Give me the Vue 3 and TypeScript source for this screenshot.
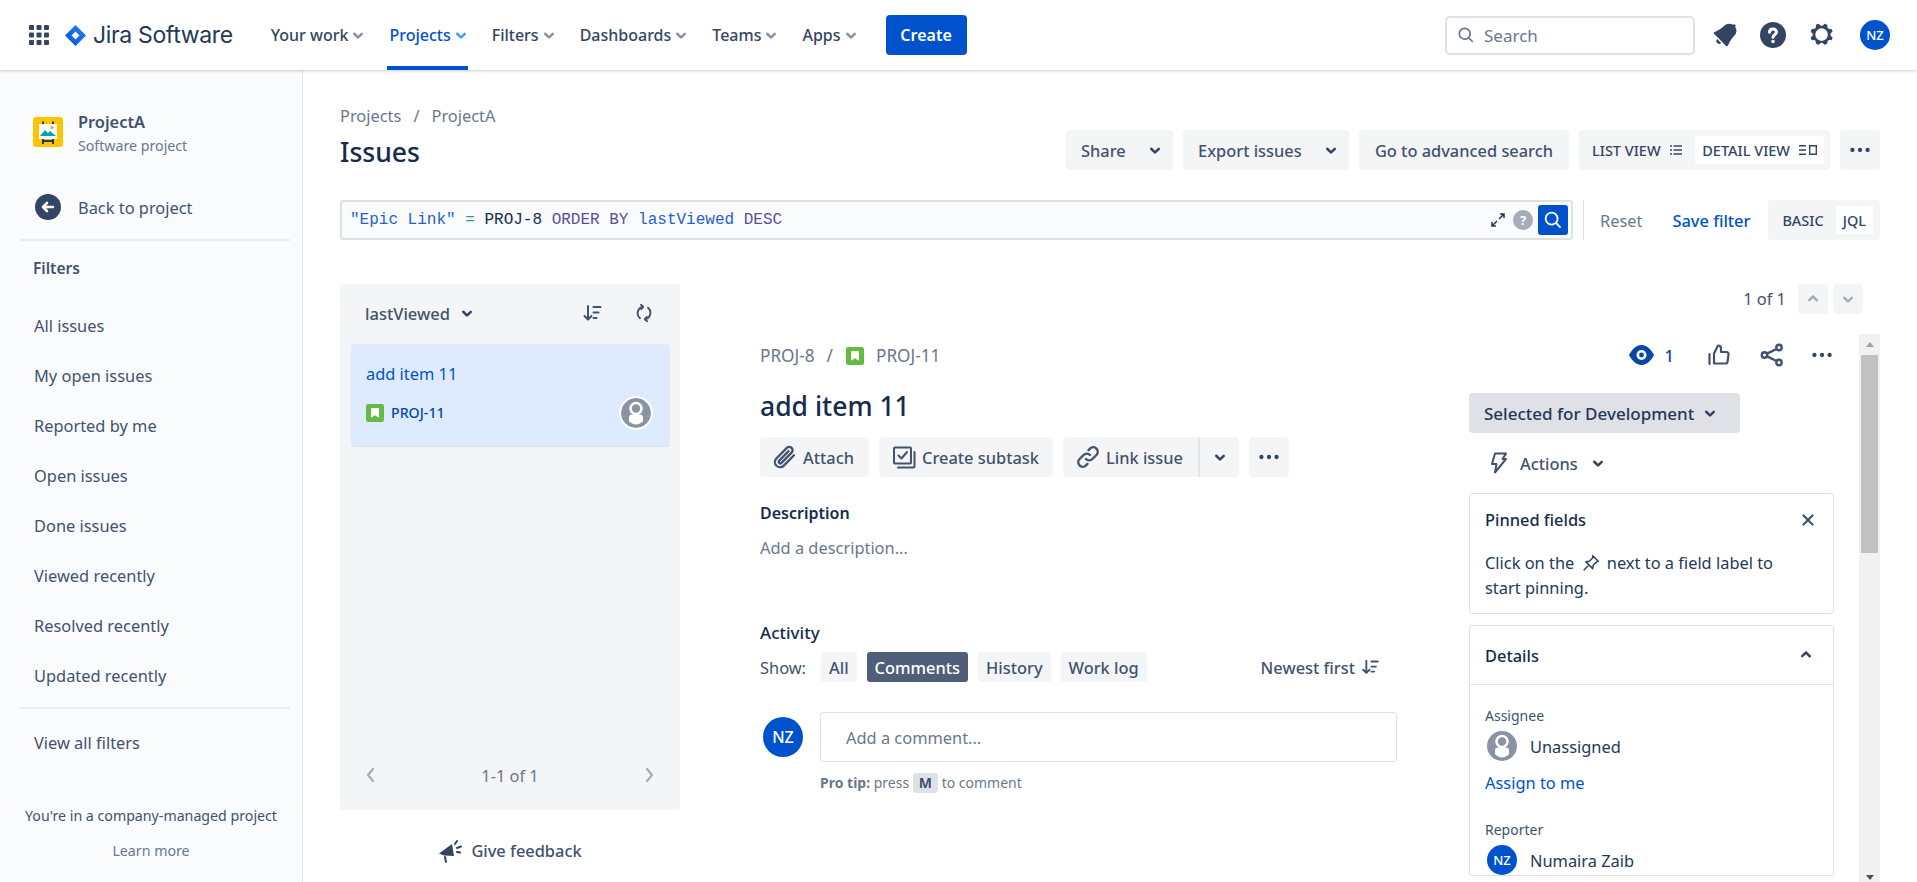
<script setup lang="ts">
const navItems = ['Your work', 'Projects', 'Filters', 'Dashboards', 'Teams', 'Apps'];
const filters = [
    'All issues',
    'My open issues',
    'Reported by me',
    'Open issues',
    'Done issues',
    'Viewed recently',
    'Resolved recently',
    'Updated recently'
];
const activityTabs = ['All', 'Comments', 'History', 'Work log'];
</script>

<template>
    <svg class="sprite" xmlns="http://www.w3.org/2000/svg">
        <symbol id="chev" viewBox="0 0 24 24">
            <path fill="currentColor" d="M8.292 10.293a1.009 1.009 0 000 1.419l2.939 2.965c.218.215.5.322.779.322s.556-.107.769-.322l2.93-2.955a1.01 1.01 0 000-1.419.987.987 0 00-1.406 0l-2.298 2.317-2.307-2.327a.99.99 0 00-1.406 0z" />
        </symbol>
        <symbol id="more" viewBox="0 0 24 24">
            <circle cx="5" cy="12" r="2" fill="currentColor" />
            <circle cx="12" cy="12" r="2" fill="currentColor" />
            <circle cx="19" cy="12" r="2" fill="currentColor" />
        </symbol>
        <symbol id="search" viewBox="0 0 24 24">
            <path fill="currentColor" d="M16.436 15.085l3.94 4.01a1 1 0 01-1.425 1.402l-3.938-4.006a7.5 7.5 0 111.423-1.406zM10.5 16a5.5 5.5 0 100-11 5.5 5.5 0 000 11z" />
        </symbol>
        <symbol id="sort" viewBox="0 0 24 24">
            <path fill="none" stroke="currentColor" stroke-width="2" stroke-linecap="round" stroke-linejoin="round" d="M8 5v13M4.5 15l3.5 3.5 3.5-3.5M13.5 6h7M13.5 11.5h5M13.5 17h3" />
        </symbol>
        <symbol id="story" viewBox="0 0 16 16">
            <rect width="16" height="16" rx="2" fill="#65ba43" />
            <path fill="#fff" d="M5 3.5h6a.5.5 0 01.5.5v8.2L8 10l-3.500 2.200V4a.5.5 0 01.5-.5z" />
        </symbol>
        <symbol id="person" viewBox="0 0 30 30">
            <circle cx="15" cy="15" r="15" fill="#8993a4" />
            <circle cx="15" cy="10.500" r="5.500" fill="none" stroke="#fff" stroke-width="2.600" />
            <path fill="#fff" d="M8 19.500a3 3 0 013-3h8a3 3 0 013 3v3.800a9.500 9.500 0 01-14 0z" />
        </symbol>
    </svg>

    <div class="page">
        <header class="topnav">
            <svg class="apps" viewBox="0 0 20 20">
                <g fill="#344563">
                    <rect x="0" y="0" width="5" height="5" rx="1" />
                    <rect x="7.500" y="0" width="5" height="5" rx="1" />
                    <rect x="15" y="0" width="5" height="5" rx="1" />
                    <rect x="0" y="7.500" width="5" height="5" rx="1" />
                    <rect x="7.500" y="7.500" width="5" height="5" rx="1" />
                    <rect x="15" y="7.500" width="5" height="5" rx="1" />
                    <rect x="0" y="15" width="5" height="5" rx="1" />
                    <rect x="7.500" y="15" width="5" height="5" rx="1" />
                    <rect x="15" y="15" width="5" height="5" rx="1" />
                </g>
            </svg>
            <svg class="logo" viewBox="0 0 21 21">
                <defs>
                    <linearGradient id="jira-blue" x1="0" y1="1" x2="1" y2="0">
                        <stop offset="0" stop-color="#0052cc" />
                        <stop offset="1" stop-color="#2684ff" />
                    </linearGradient>
                </defs>
                <path fill="url(#jira-blue)" fill-rule="evenodd" d="M10.500 0l10.500 10.500-10.500 10.500-10.500-10.500zM10.500 6.500l-4 4 4 4 4-4z" />
            </svg>
            <span class="wordmark">Jira Software</span>
            <nav class="nav-items">
                <a v-for="item in navItems" :key="item" class="nav-item" :class="{ active: item === 'Projects' }">
                    {{ item }}
                    <svg class="nav-chev"><use href="#chev" /></svg>
                </a>
            </nav>
            <button class="create">Create</button>
            <div class="nav-right">
                <div class="search-box">
                    <svg class="search-icon"><use href="#search" /></svg>
                    <span>Search</span>
                </div>
                <svg class="bell" viewBox="0 0 24 24">
                    <path fill="#344563" d="M6.485 17.669a2 2 0 002.829 0l-2.829-2.83a2 2 0 000 2.83zm4.897-12.191l-.725.725c-.782.782-2.21 1.813-3.206 2.311l-3.017 1.509c-.495.248-.584.774-.187 1.171l8.556 8.556c.398.396.922.313 1.171-.188l1.51-3.016c.494-.988 1.526-2.42 2.311-3.206l.725-.726a5.048 5.048 0 00.64-6.356 1.01 1.01 0 10-1.354-1.494c-.023.025-.046.049-.066.075a5.043 5.043 0 00-2.788-.84 5.036 5.036 0 00-3.57 1.479z" />
                </svg>
                <svg class="help" viewBox="0 0 26 26">
                    <circle cx="13" cy="13" r="13" fill="#344563" />
                    <path fill="none" stroke="#fff" stroke-width="3" stroke-linecap="round" d="M9.500 10.200c0-2 1.500-3.200 3.500-3.200s3.500 1.300 3.500 3.100c0 2.700-3.500 2.700-3.500 5.200" />
                    <circle cx="13" cy="19.500" r="1.800" fill="#fff" />
                </svg>
                <svg class="gear" viewBox="0 0 24 24">
                    <path fill="#344563" fill-rule="evenodd" d="M11.701 16.700a5.002 5.002 0 110-10.003 5.002 5.002 0 010 10.004m8.368-3.117a1.995 1.995 0 01-1.346-1.885c0-.876.563-1.613 1.345-1.885a.48.48 0 00.315-.574 8.947 8.947 0 00-.836-1.993.477.477 0 00-.598-.195 2.040 2.040 0 01-1.290.08 1.988 1.988 0 01-1.404-1.395 2.040 2.040 0 01.076-1.297.478.478 0 00-.196-.597 8.980 8.980 0 00-1.975-.826.479.479 0 00-.574.314 1.995 1.995 0 01-1.885 1.346 1.994 1.994 0 01-1.884-1.345.482.482 0 00-.575-.315c-.708.2-1.379.485-2.004.842a.47.47 0 00-.198.582A2.002 2.002 0 014.445 7.060a.478.478 0 00-.595.196 8.946 8.946 0 00-.833 1.994.48.48 0 00.308.572 1.995 1.995 0 011.323 1.877c0 .867-.552 1.599-1.324 1.877a.479.479 0 00-.308.57 8.990 8.990 0 00.723 1.790.477.477 0 00.624.194c.595-.273 1.301-.302 1.883.09.72.485.994 1.303.815 2.105a.466.466 0 00.195.533 8.990 8.990 0 001.992.9.474.474 0 00.571-.308 1.996 1.996 0 011.884-1.335c.875 0 1.625.553 1.899 1.335.09.246.35.38.57.308a8.990 8.990 0 001.993-.9.467.467 0 00.195-.533c-.18-.802.096-1.620.815-2.104.582-.393 1.288-.364 1.883-.09.232.107.5.021.624-.195a8.990 8.990 0 00.723-1.790.479.479 0 00-.308-.57z" />
                </svg>
                <span class="avatar avatar-nav">NZ</span>
            </div>
        </header>

        <div class="body">
            <aside class="sidebar">
                <div class="project">
                    <svg class="project-icon" viewBox="0 0 30 30">
                        <rect width="30" height="30" rx="3" fill="#ffc400" />
                        <path stroke="#253858" stroke-width="2" d="M10 4.500v3M20 4.500v3M10 22v5M20 22v5M10 24h10" />
                        <rect x="6" y="7" width="18" height="15" fill="#fff" />
                        <path fill="#00a3bf" d="M7 19l5-6 3 3 2-2 6 5z" />
                        <circle cx="19" cy="10.500" r="1.500" fill="#ff991f" />
                    </svg>
                    <div>
                        <div class="project-name">ProjectA</div>
                        <div class="project-type">Software project</div>
                    </div>
                </div>
                <a class="back">
                    <svg class="back-icon" viewBox="0 0 26 26">
                        <circle cx="13" cy="13" r="13" fill="#344563" />
                        <path fill="none" stroke="#fff" stroke-width="2.600" stroke-linecap="round" stroke-linejoin="round" d="M18 13H8.500M12 9l-4 4 4 4" />
                    </svg>
                    Back to project
                </a>
                <div class="side-divider"></div>
                <div class="filters-title">Filters</div>
                <a v-for="f in filters" :key="f" class="filter-item">{{ f }}</a>
                <div class="side-divider side-divider-low"></div>
                <a class="filter-item view-all">View all filters</a>
                <div class="side-footer">
                    <span>You're in a company-managed project</span>
                    <a class="learn">Learn more</a>
                </div>
            </aside>

            <main class="main">
                <div class="head-row">
                    <div>
                        <div class="crumbs"><span>Projects</span><span class="slash">/</span><span>ProjectA</span></div>
                        <h1 class="page-title">Issues</h1>
                    </div>
                    <div class="head-actions">
                        <button class="btn btn-share">Share <svg class="btn-chev"><use href="#chev" /></svg></button>
                        <button class="btn btn-export">Export issues <svg class="btn-chev"><use href="#chev" /></svg></button>
                        <button class="btn btn-advanced">Go to advanced search</button>
                        <div class="toggle toggle-view">
                            <span class="toggle-item">
                                LIST VIEW
                                <svg class="toggle-icon" viewBox="0 0 12 12"><path stroke="currentColor" stroke-width="1.400" d="M0 2h2M3.500 2H12M0 6h2M3.500 6H12M0 10h2M3.500 10H12" /></svg>
                            </span>
                            <span class="toggle-item on">
                                DETAIL VIEW
                                <svg class="toggle-icon wide" viewBox="0 0 18 12"><path fill="none" stroke="currentColor" stroke-width="1.400" d="M0 1.700h7M0 6h7M0 10.300h7M10.700 1.700h6.600v8.600h-6.600z" /></svg>
                            </span>
                        </div>
                        <button class="btn btn-icon"><svg class="more-icon"><use href="#more" /></svg></button>
                    </div>
                </div>

                <div class="jql-row">
                    <div class="jql-box">
                        <code class="jql">
                            <span class="c-field">"Epic Link"</span> <span class="c-op">=</span> PROJ-8 <span class="c-kw">ORDER BY</span> <span class="c-field">lastViewed</span> <span class="c-kw">DESC</span>
                        </code>
                        <svg class="expand" viewBox="0 0 14 14"><path fill="none" stroke="#253858" stroke-width="1.500" d="M8 6l5-5M9 1h4v4M6 8l-5 5M1 9v4h4" /></svg>
                        <span class="jql-help">?</span>
                        <span class="jql-search"><svg><use href="#search" /></svg></span>
                    </div>
                    <div class="jql-sep"></div>
                    <a class="reset">Reset</a>
                    <a class="save">Save filter</a>
                    <div class="toggle toggle-small">
                        <span class="toggle-item">BASIC</span>
                        <span class="toggle-item on">JQL</span>
                    </div>
                </div>

                <div class="content">
                    <section class="list-col">
                        <div class="list-panel">
                            <div class="list-head">
                                <span class="sort-label">lastViewed</span>
                                <svg class="sort-chev"><use href="#chev" /></svg>
                                <svg class="list-sort"><use href="#sort" /></svg>
                                <svg class="refresh" viewBox="0 0 18 18">
                                    <g fill="none" stroke="#42526e" stroke-width="1.900" stroke-linecap="round" stroke-linejoin="round">
                                        <path d="M8 2.800A6.500 6.500 0 005 14.200M6 .8l2.200 2-2 2.200" />
                                        <path d="M10 15.200A6.500 6.500 0 0013 3.800M12 17.200l-2.200-2 2-2.200" />
                                    </g>
                                </svg>
                            </div>
                            <div class="issue-card">
                                <div class="issue-card-title">add item 11</div>
                                <div class="issue-card-row">
                                    <svg class="story"><use href="#story" /></svg>
                                    <span class="issue-card-key">PROJ-11</span>
                                    <svg class="card-person"><use href="#person" /></svg>
                                </div>
                            </div>
                            <div class="list-pager">
                                <svg class="pager-arrow" viewBox="0 0 10 16"><path fill="none" stroke="#a5adba" stroke-width="2.200" stroke-linecap="round" stroke-linejoin="round" d="M8 2L3 8l5 6" /></svg>
                                <span>1-1 of 1</span>
                                <svg class="pager-arrow" viewBox="0 0 10 16"><path fill="none" stroke="#a5adba" stroke-width="2.200" stroke-linecap="round" stroke-linejoin="round" d="M2 2l5 6-5 6" /></svg>
                            </div>
                        </div>
                        <a class="feedback">
                            <svg class="feedback-icon" viewBox="0 0 24 24">
                                <path fill="#344563" d="M1 14.500L14 5l2 12-10-.5z" />
                                <path fill="none" stroke="#344563" stroke-width="2" stroke-linecap="round" d="M7 18l1 5M17 5l2-3M19 9l4-1.500M19 13l3 .5" />
                            </svg>
                            Give feedback
                        </a>
                    </section>

                    <section class="detail">
                        <div class="detail-pager">
                            <span class="pager-text">1 of 1</span>
                            <button class="pager-btn"><svg class="flip"><use href="#chev" /></svg></button>
                            <button class="pager-btn"><svg><use href="#chev" /></svg></button>
                        </div>
                        <div class="detail-scroll">
                            <div class="issue-main">
                                <div class="issue-crumbs">
                                    <span>PROJ-8</span><span class="slash">/</span>
                                    <svg class="story story-crumb"><use href="#story" /></svg>
                                    <span>PROJ-11</span>
                                </div>
                                <h2 class="issue-title">add item 11</h2>
                                <div class="issue-actions">
                                    <button class="btn btn-attach">
                                        <svg class="act-icon" viewBox="3 2 19 20"><path fill="none" stroke="#42526e" stroke-width="1.900" stroke-linecap="round" stroke-linejoin="round" d="M20 10.500l-8.500 8.700a4.300 4.300 0 01-6.200-6L14 4.400a2.800 2.800 0 014 4l-8.400 8.500a1.300 1.300 0 01-1.900-1.900l7.800-7.900" /></svg>
                                        Attach
                                    </button>
                                    <button class="btn btn-subtask">
                                        <svg class="act-icon" viewBox="0 0 24 24"><path fill="none" stroke="#42526e" stroke-width="2" stroke-linecap="round" stroke-linejoin="round" d="M3 2.500h15a1 1 0 011 1v14a1 1 0 01-1 1H3a1 1 0 01-1-1v-14a1 1 0 011-1zM6.500 10.500l3 3 5.500-6.500M22.500 7v14a1.500 1.500 0 01-1.500 1.500H6" /></svg>
                                        Create subtask
                                    </button>
                                    <div class="split">
                                        <button class="btn btn-left">
                                            <svg class="act-icon" viewBox="0 0 24 24"><path fill="none" stroke="#42526e" stroke-width="2.400" stroke-linecap="round" d="M10 14a4.500 4.500 0 006.400 0l4-4a4.500 4.500 0 00-6.400-6.400l-1.500 1.500M14 10a4.500 4.500 0 00-6.400 0l-4 4a4.500 4.500 0 006.400 6.400l1.500-1.500" /></svg>
                                            Link issue
                                        </button>
                                        <button class="btn btn-right"><svg class="btn-chev"><use href="#chev" /></svg></button>
                                    </div>
                                    <button class="btn btn-icon"><svg class="more-icon"><use href="#more" /></svg></button>
                                </div>
                                <h3 class="sec-title desc-title">Description</h3>
                                <div class="placeholder">Add a description...</div>
                                <h3 class="sec-title activity-title">Activity</h3>
                                <div class="activity-row">
                                    <span class="show">Show:</span>
                                    <button v-for="tab in activityTabs" :key="tab" class="tab" :class="{ selected: tab === 'Comments' }">{{ tab }}</button>
                                    <span class="newest">Newest first <svg class="newest-icon"><use href="#sort" /></svg></span>
                                </div>
                                <div class="comment-row">
                                    <span class="avatar avatar-comment">NZ</span>
                                    <div class="comment-box">Add a comment...</div>
                                </div>
                                <div class="pro-tip"><b>Pro tip:</b> press <kbd>M</kbd> to comment</div>
                            </div>

                            <div class="issue-side">
                                <div class="side-icons">
                                    <svg class="eye" viewBox="0 0 25 20">
                                        <path fill="#0747a6" d="M12.500 0c6 0 10.500 6 12.500 10-2 4-6.500 10-12.500 10S2 14 0 10C2 6 6.500 0 12.500 0z" />
                                        <circle cx="12.500" cy="10" r="5" fill="#fff" />
                                        <circle cx="12.500" cy="10" r="2.400" fill="#0747a6" />
                                    </svg>
                                    <span class="watch-count">1</span>
                                    <svg class="thumb" viewBox="0 0 22 22"><path fill="none" stroke="#42526e" stroke-width="2.200" stroke-linecap="round" stroke-linejoin="round" d="M1.500 10v10M6 9.500l4-8c1.800 0 3 1.300 3 3v3.500h5.500a2 2 0 012 2.300l-1 7.500a2 2 0 01-2 1.700H6z" /></svg>
                                    <svg class="share" viewBox="0 0 24 24"><g fill="none" stroke="#42526e" stroke-width="2.400"><circle cx="19" cy="4.500" r="2.700" /><circle cx="19" cy="19.500" r="2.700" /><circle cx="4.500" cy="12" r="2.700" /><path d="M7 10.700L16.600 6M7 13.300l9.600 4.700" /></g></svg>
                                    <svg class="more-icon more-side"><use href="#more" /></svg>
                                </div>
                                <button class="status">Selected for Development <svg class="btn-chev"><use href="#chev" /></svg></button>
                                <div class="actions-row">
                                    <svg class="bolt" viewBox="0 0 18 22"><path fill="none" stroke="#42526e" stroke-width="2" stroke-linejoin="round" d="M5 1.500h11l-3.500 5.500H16L5 20.500l1.500-8.500H2z" /></svg>
                                    <span>Actions</span>
                                    <svg class="btn-chev"><use href="#chev" /></svg>
                                </div>
                                <div class="card">
                                    <div class="card-top">
                                        <span class="card-title">Pinned fields</span>
                                        <svg class="close" viewBox="0 0 12 12"><path stroke="#42526e" stroke-width="2.200" stroke-linecap="round" d="M1.500 1.500l9 9M10.500 1.500l-9 9" /></svg>
                                    </div>
                                    <p class="pinned-text">
                                        Click on the
                                        <svg class="pin" viewBox="0 0 16 16"><path fill="none" stroke="#344563" stroke-width="1.400" stroke-linejoin="round" d="M9.500 1.500l5 5-1.500.5-3 3-.5 3-6-6 3-.5 3-3zM5.500 10.500L1.500 14.500" /></svg>
                                        next to a field label to<br>start pinning.
                                    </p>
                                </div>
                                <div class="card card-details">
                                    <div class="details-head">
                                        <span class="card-title">Details</span>
                                        <svg class="btn-chev flip"><use href="#chev" /></svg>
                                    </div>
                                    <div class="details-body">
                                        <div class="field-label">Assignee</div>
                                        <div class="field-value">
                                            <svg class="field-person"><use href="#person" /></svg>
                                            Unassigned
                                        </div>
                                        <a class="assign">Assign to me</a>
                                        <div class="field-label reporter">Reporter</div>
                                        <div class="field-value">
                                            <span class="avatar avatar-field">NZ</span>
                                            Numaira Zaib
                                        </div>
                                    </div>
                                </div>
                            </div>

                            <div class="scrollbar">
                                <span class="arrow-up"></span>
                                <span class="thumb-bar"></span>
                                <span class="arrow-down"></span>
                            </div>
                        </div>
                    </section>
                </div>
            </main>
        </div>
    </div>
</template>

<style>
html, body {
    margin: 0;
    overflow: hidden;
    background: #fff;
}
</style>

<style scoped>
.sprite {
    display: none;
}

.page {
    display: flex;
    flex-direction: column;
    width: 1917px;
    height: 882px;
    overflow: hidden;
    font-family: "Noto Sans", "Open Sans", sans-serif;
    font-size: 16.4px;
    color: #42526e;
}

button {
    font: inherit;
    border: 0;
    cursor: pointer;
}

h1, h2, h3, p {
    margin: 0;
}

.avatar {
    display: inline-flex;
    align-items: center;
    justify-content: center;
    flex: none;
    border-radius: 50%;
    background: #0052cc;
    color: #fff;
    font-weight: 500;
}

/* top bar */
.topnav {
    position: relative;
    z-index: 2;
    display: flex;
    flex: none;
    align-items: center;
    height: 70px;
    padding: 0 27px 0 29px;
    background: #fff;
    box-shadow: 0 1px 3px rgba(9, 30, 66, 0.22);
    box-sizing: border-box;
}

.apps {
    width: 20px;
    height: 20px;
}

.logo {
    width: 21px;
    height: 21px;
    margin-left: 16px;
}

.wordmark {
    margin-left: 7px;
    font-family: Inter, sans-serif;
    font-size: 23px;
    color: #253858;
    letter-spacing: -0.35px;
}

.nav-items {
    display: flex;
    align-self: stretch;
    gap: 22px;
    margin-left: 36px;
}

.nav-item {
    display: flex;
    align-items: center;
    height: 70px;
    padding: 0 2px;
    box-sizing: border-box;
    font-size: 16px;
    font-weight: 500;
    color: #344563;
}

.nav-item.active {
    color: #0052cc;
    border-bottom: 4px solid #0052cc;
    padding-top: 4px;
}

.nav-chev {
    width: 30px;
    height: 30px;
    margin: 0 -10px 0 -5px;
    color: #8993a4;
}

.active .nav-chev {
    color: #4c9aff;
}

.create {
    width: 81px;
    height: 40px;
    margin-left: 28px;
    border-radius: 4px;
    background: #0052cc;
    color: #fff;
    font-weight: 600;
    font-size: 16px;
}

.nav-right {
    display: flex;
    align-items: center;
    margin-left: auto;
}

.search-box {
    display: flex;
    align-items: center;
    width: 250px;
    height: 39px;
    box-sizing: border-box;
    padding-left: 9px;
    border: 2px solid #dfe1e6;
    border-radius: 5px;
    color: #6b778c;
    font-size: 17px;
}

.search-icon {
    width: 20px;
    height: 20px;
    margin-right: 8px;
}

.bell {
    width: 34px;
    height: 34px;
    margin-left: 13px;
}

.help {
    width: 26px;
    height: 26px;
    margin-left: 18px;
}

.gear {
    width: 30px;
    height: 30px;
    margin-left: 21px;
}

.avatar-nav {
    width: 30px;
    height: 30px;
    margin-left: 23px;
    font-size: 13px;
}

/* left sidebar */
.body {
    display: flex;
    flex: 1;
    min-height: 0;
}

.sidebar {
    display: flex;
    flex: none;
    flex-direction: column;
    box-sizing: border-box;
    width: 303px;
    padding: 40px 0 19px;
    border-right: 1px solid #e4e6ea;
    background: #fafbfc;
}

.project {
    display: flex;
    gap: 15px;
    padding-left: 33px;
}

.project-icon {
    width: 30px;
    height: 30px;
    margin-top: 7px;
}

.project-name {
    font-weight: 600;
    line-height: 24px;
}

.project-type {
    font-size: 14.2px;
    line-height: 24px;
    color: #6b778c;
}

.back {
    display: flex;
    align-items: center;
    gap: 17px;
    height: 40px;
    margin-top: 29px;
    padding-left: 35px;
}

.back-icon {
    width: 26px;
    height: 26px;
}

.side-divider {
    height: 2px;
    margin: 12px 12px 0 20px;
    background: #ebecf0;
}

.side-divider-low {
    margin-top: 7px;
}

.filters-title {
    margin: 15px 0 20px 33px;
    font-size: 15.5px;
    font-weight: 600;
    line-height: 24px;
}

.filter-item {
    display: flex;
    align-items: center;
    height: 50px;
    padding-left: 34px;
    flex: none;
}

.view-all {
    margin-top: 8px;
}

.side-footer {
    display: flex;
    flex-direction: column;
    align-items: center;
    gap: 11px;
    margin-top: auto;
    font-size: 14.2px;
    line-height: 24px;
}

.learn {
    color: #6b778c;
}

/* main header */
.main {
    flex: 1;
    min-width: 0;
    padding: 34px 37px 0;
}

.head-row {
    display: flex;
    align-items: flex-end;
    justify-content: space-between;
}

.crumbs {
    display: flex;
    line-height: 24px;
    color: #6b778c;
}

.slash {
    margin: 0 12px;
}

.page-title {
    margin-top: 6px;
    font-size: 26.5px;
    font-weight: 500;
    line-height: 36px;
    color: #172b4d;
}

.head-actions {
    display: flex;
    gap: 10px;
}

.btn {
    display: inline-flex;
    align-items: center;
    flex: none;
    height: 40px;
    padding: 0 15px;
    border-radius: 4px;
    background: #f4f5f7;
    color: #42526e;
    font-weight: 500;
}

.btn-chev {
    flex: none;
    width: 30px;
    height: 30px;
    color: #344563;
}

.btn-share {
    justify-content: space-between;
    width: 107px;
    padding-right: 3px;
}

.btn-export {
    justify-content: space-between;
    width: 166px;
    padding-right: 3px;
}

.btn-advanced {
    justify-content: center;
    width: 210px;
    padding: 0;
}

.btn-icon {
    justify-content: center;
    width: 40px;
    padding: 0;
}

.more-icon {
    width: 26px;
    height: 26px;
    color: #344563;
}

.toggle {
    display: flex;
    align-items: center;
    height: 40px;
    border-radius: 4px;
    background: #f4f5f7;
    font-size: 14.5px;
    font-weight: 500;
    color: #344563;
}

.toggle-view {
    justify-content: space-between;
    box-sizing: border-box;
    width: 251px;
    padding: 0 6px 0 13px;
}

.toggle-item {
    display: inline-flex;
    align-items: center;
    gap: 9px;
    height: 28px;
    border-radius: 3px;
}

.toggle-item.on {
    padding: 0 7px;
    background: #fff;
}

.toggle-icon {
    width: 12px;
    height: 12px;
}

.toggle-icon.wide {
    width: 18px;
}

/* jql */
.jql-row {
    display: flex;
    align-items: center;
    margin-top: 30px;
}

.jql-box {
    display: flex;
    flex: none;
    align-items: center;
    box-sizing: border-box;
    width: 1233px;
    height: 40px;
    padding: 0 3px 0 8px;
    border: 2px solid #dfe1e6;
    border-radius: 3px;
    background: #fafbfc;
}

.jql {
    flex: 1;
    font-family: "Liberation Mono", monospace;
    font-size: 16px;
    color: #172b4d;
}

.c-field {
    color: #1f62cc;
}

.c-op {
    color: #2f9e87;
}

.c-kw {
    color: #5e4d9c;
}

.expand {
    width: 14px;
    height: 14px;
    margin-right: 8px;
}

.jql-help {
    display: flex;
    align-items: center;
    justify-content: center;
    width: 20px;
    height: 20px;
    margin-right: 5px;
    border-radius: 50%;
    background: #a5adba;
    color: #fff;
    font-size: 13px;
    font-weight: 700;
}

.jql-search {
    display: flex;
    align-items: center;
    justify-content: center;
    width: 30px;
    height: 30px;
    border-radius: 3px;
    background: #0052cc;
    color: #fff;
}

.jql-search svg {
    width: 22px;
    height: 22px;
}

.jql-sep {
    width: 1px;
    height: 40px;
    margin: 0 16px 0 10px;
    background: #dfe1e6;
}

.reset {
    color: #6b778c;
}

.save {
    margin-left: 30px;
    color: #0052cc;
    font-weight: 500;
}

.toggle-small {
    gap: 12px;
    margin-left: auto;
    padding: 0 7px 0 14px;
}

.toggle-small .toggle-item.on {
    padding: 0 7px;
}

/* issue list */
.content {
    display: flex;
    margin-top: 44px;
}

.list-col {
    flex: none;
    width: 340px;
}

.list-panel {
    display: flex;
    flex-direction: column;
    height: 526px;
    border-radius: 4px;
    background: #f4f5f7;
}

.list-head {
    display: flex;
    align-items: center;
    flex: none;
    height: 60px;
    padding: 0 27px 2px 25px;
    box-sizing: border-box;
}

.sort-label {
    font-size: 16.5px;
    font-weight: 500;
}

.sort-chev {
    width: 30px;
    height: 30px;
    margin-left: 2px;
    color: #344563;
}

.list-sort {
    width: 24px;
    height: 24px;
    margin-left: auto;
    margin-right: -1px;
}

.refresh {
    width: 18px;
    height: 18px;
    margin-left: 32px;
}

.issue-card {
    flex: none;
    box-sizing: border-box;
    height: 102px;
    margin: 0 10px 0 11px;
    padding: 18px 15px 0;
    border-radius: 4px;
    background: #deebff;
    box-shadow: 0 1px 1px rgba(9, 30, 66, 0.1);
}

.issue-card-title {
    line-height: 24px;
    color: #0052cc;
}

.issue-card-row {
    display: flex;
    align-items: center;
    margin-top: 10px;
    height: 34px;
}

.story {
    flex: none;
    width: 18px;
    height: 18px;
}

.issue-card-key {
    margin: 0 0 2px 7px;
    font-size: 14.2px;
    font-weight: 500;
    color: #0747a6;
}

.card-person {
    width: 34px;
    height: 34px;
    margin-left: auto;
    margin-right: 2px;
    border-radius: 50%;
    background: #fff;
    padding: 2px;
    box-sizing: border-box;
}

.list-pager {
    display: flex;
    align-items: center;
    justify-content: space-between;
    height: 70px;
    margin-top: auto;
    padding: 0 25px;
    color: #6b778c;
}

.pager-arrow {
    width: 10px;
    height: 16px;
}

.feedback {
    display: flex;
    align-items: center;
    justify-content: center;
    gap: 9px;
    margin-top: 29px;
    line-height: 24px;
    font-weight: 500;
}

.feedback-icon {
    width: 24px;
    height: 24px;
}

/* issue detail */
.detail {
    flex: 1;
    min-width: 0;
    margin-left: 80px;
}

.detail-pager {
    display: flex;
    align-items: flex-start;
    justify-content: flex-end;
    gap: 5px;
    height: 50px;
    padding-right: 17px;
    line-height: 30px;
}

.pager-text {
    margin-right: 7px;
}

.pager-btn {
    display: flex;
    align-items: center;
    justify-content: center;
    width: 30px;
    height: 30px;
    padding: 0;
    border-radius: 4px;
    background: #f4f5f7;
    color: #a5adba;
}

.pager-btn svg {
    width: 30px;
    height: 30px;
}

.flip {
    transform: rotate(180deg);
}

.detail-scroll {
    display: flex;
    align-items: flex-start;
}

.issue-main {
    flex: none;
    width: 637px;
    padding-top: 10px;
}

.issue-crumbs {
    display: flex;
    align-items: center;
    font-size: 17.2px;
    line-height: 24px;
    color: #6b778c;
}

.story-crumb {
    margin-right: 12px;
}

.issue-crumbs .slash {
    margin: 0 13px 0 12px;
}

.issue-title {
    margin-top: 18px;
    font-size: 26.5px;
    font-weight: 500;
    line-height: 40px;
    color: #172b4d;
}

.issue-actions {
    display: flex;
    gap: 10px;
    margin-top: 11px;
}

.act-icon {
    width: 24px;
    height: 24px;
    margin-right: 6px;
}

.issue-actions .btn {
    padding: 0 0 0 13px;
}

.issue-actions .btn-attach {
    width: 109px;
}

.issue-actions .btn-subtask {
    width: 174px;
}

.split {
    display: flex;
}

.issue-actions .btn-left {
    width: 135px;
    border-radius: 4px 0 0 4px;
}

.issue-actions .btn-right {
    width: 41px;
    padding: 0;
    justify-content: center;
    border-radius: 0 4px 4px 0;
    border-left: 2px solid #e4e6ea;
}

.issue-actions .btn-icon {
    padding: 0;
}

.sec-title {
    font-size: 16px;
    font-weight: 600;
    line-height: 24px;
    color: #172b4d;
}

.desc-title {
    margin-top: 24px;
}

.placeholder {
    margin-top: 11px;
    line-height: 24px;
    color: #6b778c;
}

.activity-title {
    margin-top: 61px;
    font-size: 17px;
    font-weight: 500;
}

.activity-row {
    display: flex;
    align-items: center;
    gap: 10px;
    margin-top: 7px;
    height: 30px;
}

.show {
    margin-right: 5px;
    color: #42526e;
}

.tab {
    height: 30px;
    padding: 0 8px;
    border-radius: 3px;
    background: #f4f5f7;
    color: #42526e;
    font-weight: 500;
}

.tab.selected {
    background: #505f79;
    color: #fff;
}

.newest {
    display: flex;
    align-items: center;
    gap: 4px;
    margin-left: auto;
    margin-right: 16px;
    font-weight: 500;
}

.newest-icon {
    width: 22px;
    height: 22px;
}

.comment-row {
    display: flex;
    gap: 17px;
    margin-top: 30px;
}

.avatar-comment {
    width: 40px;
    height: 40px;
    margin: 5px 0 0 3px;
    font-size: 16px;
}

.comment-box {
    display: flex;
    flex: 1;
    align-items: center;
    box-sizing: border-box;
    height: 50px;
    padding-left: 25px;
    border: 1px solid #dfe1e6;
    border-radius: 3px;
    color: #6b778c;
}

.pro-tip {
    margin: 9px 0 0 60px;
    font-size: 14px;
    line-height: 24px;
    color: #6b778c;
}

kbd {
    display: inline-block;
    padding: 0 6px;
    border-radius: 3px;
    background: #dfe1e6;
    color: #42526e;
    font: inherit;
    font-weight: 700;
    line-height: 20px;
}

/* right column */
.issue-side {
    flex: none;
    width: 365px;
    margin-left: 72px;
}

.side-icons {
    display: flex;
    align-items: center;
    justify-content: flex-end;
    height: 42px;
}

.eye {
    width: 25px;
    height: 20px;
}

.watch-count {
    margin-left: 11px;
    font-weight: 500;
    color: #0747a6;
}

.thumb {
    width: 22px;
    height: 22px;
    margin-left: 34px;
}

.share {
    width: 24px;
    height: 24px;
    margin-left: 30px;
}

.more-side {
    margin-left: 25px;
    margin-right: -1px;
}

.status {
    display: flex;
    align-items: center;
    width: 271px;
    height: 40px;
    margin-top: 17px;
    padding: 0 0 0 15px;
    border-radius: 4px;
    background: #dfe1e6;
    color: #253858;
    font-size: 17px;
    font-weight: 500;
}

.status .btn-chev {
    margin-left: 1px;
}

.actions-row {
    display: flex;
    align-items: center;
    height: 40px;
    margin-top: 10px;
    padding-left: 21px;
    font-weight: 500;
}

.bolt {
    width: 18px;
    height: 22px;
    margin-right: 12px;
}

.actions-row .btn-chev {
    margin-left: 5px;
}

.card {
    box-sizing: border-box;
    margin-top: 10px;
    border: 1px solid #dfe1e6;
    border-radius: 3px;
}

.card-top {
    display: flex;
    align-items: center;
    justify-content: space-between;
    padding: 14px 19px 0 15px;
    line-height: 24px;
}

.card-title {
    font-weight: 500;
    color: #172b4d;
}

.close {
    width: 12px;
    height: 12px;
}

.pinned-text {
    margin-top: 18px;
    padding: 0 15px 13px;
    line-height: 25px;
    color: #253858;
}

.pin {
    width: 18px;
    height: 18px;
    margin: 0 3px;
    vertical-align: -3px;
}

.card-details {
    margin-top: 11px;
}

.details-head {
    display: flex;
    align-items: center;
    justify-content: space-between;
    height: 58px;
    padding: 0 12px 0 15px;
    border-bottom: 1px solid #dfe1e6;
}

.details-body {
    padding: 20px 15px 0;
}

.field-label {
    font-size: 14px;
    line-height: 22px;
}

.field-value {
    display: flex;
    align-items: center;
    gap: 13px;
    height: 30px;
    margin: 4px 0 0 2px;
    color: #253858;
}

.field-person {
    width: 30px;
    height: 30px;
}

.assign {
    display: block;
    margin-top: 10px;
    line-height: 24px;
    color: #0052cc;
}

.reporter {
    margin-top: 24px;
}

.avatar-field {
    width: 30px;
    height: 30px;
    font-size: 13px;
}

/* scrollbar, drawn because headless chrome hides the real one */
.scrollbar {
    position: relative;
    display: flex;
    flex: none;
    flex-direction: column;
    align-items: center;
    width: 21px;
    height: 548px;
    margin-left: 25px;
    background: #f1f1f1;
}

.arrow-up {
    margin-top: 8px;
    border: 4px solid transparent;
    border-top: 0;
    border-bottom: 5px solid #a3a3a3;
}

.thumb-bar {
    width: 17px;
    height: 198px;
    margin-top: 8px;
    background: #c1c1c1;
}

.arrow-down {
    margin-top: auto;
    margin-bottom: 2px;
    border: 4px solid transparent;
    border-bottom: 0;
    border-top: 5px solid #505050;
}
</style>
